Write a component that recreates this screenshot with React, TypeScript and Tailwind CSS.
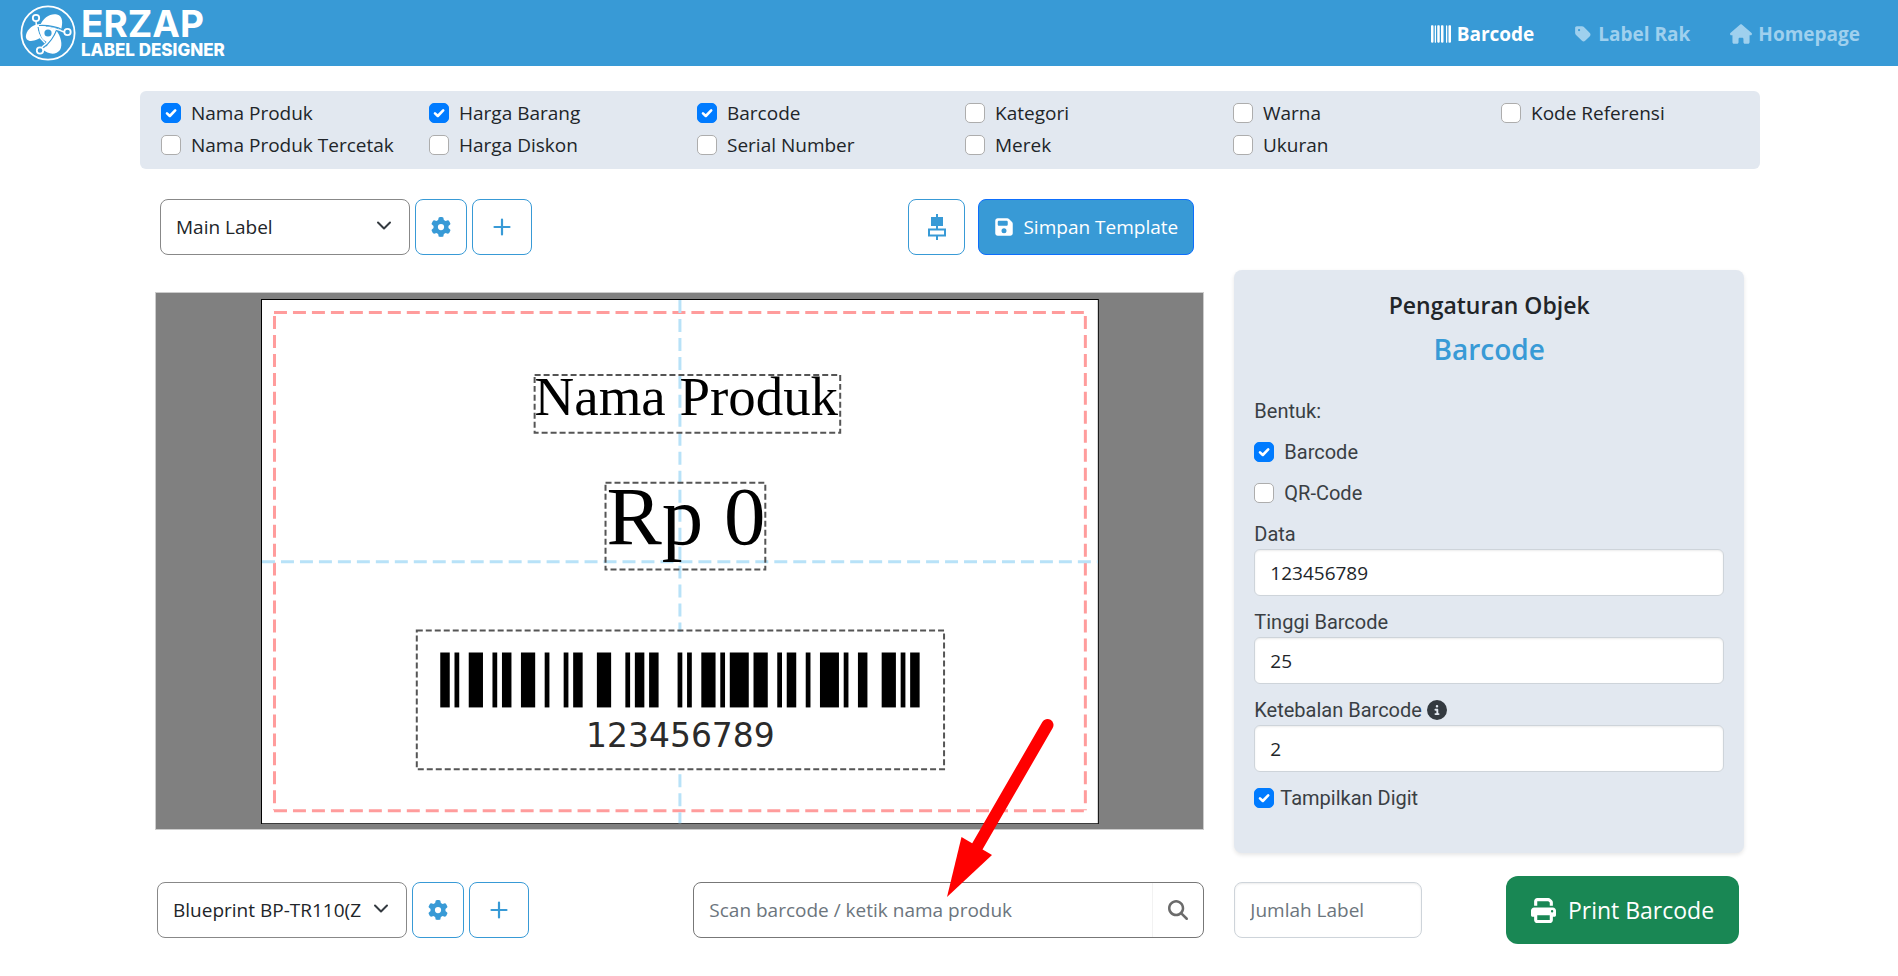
import React, { useId } from "react";
import {
  FaBarcode,
  FaCircleInfo,
  FaFloppyDisk,
  FaGear,
  FaHouse,
  FaMagnifyingGlass,
  FaPrint,
  FaTag,
} from "react-icons/fa6";

function Checkbox({ id, defaultChecked = false }: { id: string; defaultChecked?: boolean }) {
  return (
    <span className="relative inline-flex size-5 shrink-0">
      <input
        id={id}
        type="checkbox"
        defaultChecked={defaultChecked}
        className="peer size-5 appearance-none rounded-[5px] border border-[#adadad] bg-white checked:border-[#007bff] checked:bg-[#007bff]"
      />
      <svg
        viewBox="0 0 20 20"
        className="pointer-events-none absolute inset-0 hidden size-5 peer-checked:block"
        fill="none"
        stroke="#fff"
        strokeWidth="2.6"
        strokeLinecap="round"
        strokeLinejoin="round"
      >
        <path d="M6 10.4 L8.8 13 L14.2 7.4" />
      </svg>
    </span>
  );
}

function Logo() {
  return (
    <a href="#" className="flex items-center gap-[5px] text-white" aria-label="ERZAP Label Designer">
      <svg viewBox="0 0 56 56" className="size-14" fill="none">
        <circle cx="28" cy="28" r="26.6" stroke="#fff" strokeWidth="1.8" />
        <g fill="#fff">
          <path d="M26 20 C17 17 8 22 6 30 C5 35 9 37 14 35.500 C19 34 23 32 25 28 Z" />
          <path d="M20 21 C23 12 31 8 37 9.500 C43 11 43 18 41 25 C35 22 29 21 20 21 Z" />
          <path d="M36 25 C41 31 43 40 40 45 C36 50 29 50 22 44 C27 39 33 33 36 25 Z" />
          <path d="M22 21 L37 25 L28 38 L21 33 Z" />
        </g>
        <g stroke="#389ad6" strokeWidth="1.2">
          <path d="M19 20.500 C28 20 36 21.500 43 25" />
          <path d="M37.500 23 C34 32 30 38 23 43" />
          <path d="M18 22 C19 30 22 36 27 41" />
        </g>
        <g stroke="#fff" strokeWidth="1.5">
          <path d="M16 16 C16 25 19 33 25 38" />
          <path d="M44 27 C36 23 29 22 22 22.500" />
          <path d="M22 42 C29 37 33 31 35 24" />
        </g>
        <circle cx="28" cy="28" r="3.6" fill="#389ad6" />
        <g fill="#389ad6" stroke="#fff" strokeWidth="1.8">
          <circle cx="16" cy="13" r="3.200" />
          <circle cx="47.500" cy="27" r="3.200" />
          <circle cx="20" cy="45.500" r="3.200" />
        </g>
      </svg>
      <span className="flex flex-col font-[Inter,sans-serif]">
        <span className="text-[37px] leading-[34px] font-bold">ERZAP</span>
        <span className="text-[17px] leading-[18px] font-extrabold">LABEL DESIGNER</span>
      </span>
    </a>
  );
}

const fields: { label: string; checked?: boolean }[] = [
  { label: "Nama Produk", checked: true },
  { label: "Harga Barang", checked: true },
  { label: "Barcode", checked: true },
  { label: "Kategori" },
  { label: "Warna" },
  { label: "Kode Referensi" },
  { label: "Nama Produk Tercetak" },
  { label: "Harga Diskon" },
  { label: "Serial Number" },
  { label: "Merek" },
  { label: "Ukuran" },
];

function SelectBox({ label, option }: { label: string; option: string }) {
  return (
    <span className="relative inline-flex w-[250px]">
      <select
        aria-label={label}
        className="h-14 w-full appearance-none rounded-lg border border-[#888] bg-white pr-11 pl-[15px] text-[19px]"
      >
        <option>{option}</option>
      </select>
      <svg
        viewBox="0 0 16 10"
        className="pointer-events-none absolute top-[22px] right-[18px] h-[10px] w-4"
        fill="none"
        stroke="#343a40"
        strokeWidth="2"
        strokeLinecap="round"
        strokeLinejoin="round"
      >
        <path d="M2 1.500 L8 7.500 L14 1.500" />
      </svg>
    </span>
  );
}

const outline =
  "flex h-14 items-center justify-center rounded-lg border border-[#389ad6] bg-white text-[#389ad6]";

function TemplateControls({ label, option }: { label: string; option: string }) {
  return (
    <div className="flex items-center gap-[5px]">
      <SelectBox label={label} option={option} />
      <button type="button" aria-label={label + " settings"} className={outline + " w-[52px]"}>
        <FaGear className="size-5" />
      </button>
      <button type="button" aria-label={label + " add"} className={outline + " w-[60px]"}>
        <svg viewBox="0 0 18 18" className="size-[18px]" stroke="currentColor" strokeWidth="2.2" strokeLinecap="round">
          <path d="M9 1.500 V16.500 M1.500 9 H16.500" />
        </svg>
      </button>
    </div>
  );
}

const bars = [
  [0, 2], [3, 1], [6, 3], [11, 1], [13, 2], [17, 3], [22, 1], [26, 1], [28, 2], [33, 3],
  [39, 1], [41, 2], [44, 2], [50, 1], [52, 1], [55, 3], [59, 1], [61, 4], [66, 3], [71, 1],
  [73, 2], [77, 1], [80, 4], [85, 1], [88, 2], [93, 3], [97, 1], [99, 2],
];

function LabelCanvas() {
  return (
    <div className="flex justify-center border border-[#ccc] bg-[#808080] pt-[6px] pb-[5px]">
      <svg viewBox="0 0 839 526" className="w-4/5 max-w-[839px]" role="img" aria-label="Label preview">
        <rect x="0.500" y="0.500" width="838" height="525" fill="#fff" stroke="#000" />
        <g fill="none" strokeWidth="3" strokeDasharray="13 6">
          <path d="M13 13.500 H826 M825.500 17 V512 M13.500 17 V512 M13 512.500 H826" stroke="#ff9c9c" />
          <path d="M419.500 1 V525" stroke="#b8e2f8" />
          <path d="M1 263 H838" stroke="#b8e2f8" />
        </g>
        <g fill="#000" fontFamily="'Liberation Serif', serif">
          <text x="274" y="116" fontSize="55">Nama Produk</text>
          <text x="346" y="245" fontSize="83">Rp 0</text>
        </g>
        <rect x="156.500" y="333.500" width="527" height="138" fill="#fff" />
        <g fill="none" stroke="#555" strokeWidth="2" strokeDasharray="6 3">
          <rect x="274" y="76" width="306" height="58" />
          <rect x="345" y="184" width="160" height="87" />
          <rect x="156" y="332" width="528" height="139" />
        </g>
        <g fill="#000">
          {bars.map(([start, width]) => (
            <rect key={start} x={179.5 + start * 4.753} y="354" width={width * 4.753} height="55" />
          ))}
        </g>
        <text x="420" y="449" fontSize="33" textAnchor="middle" fill="#2b2b2b" fontFamily="'DejaVu Sans', sans-serif">
          123456789
        </text>
      </svg>
    </div>
  );
}

function Field({ label, value, info = false }: { label: string; value: string; info?: boolean }) {
  const id = useId();
  return (
    <div className="flex flex-col">
      <label htmlFor={id} className="flex items-center gap-[5px] leading-[30px]">
        {label}
        {info && <FaCircleInfo className="size-5 text-[#343a40]" />}
      </label>
      <input
        id={id}
        defaultValue={value}
        className="h-[47px] w-full rounded-md border border-[#ced4da] bg-white px-[15px] font-['Open_Sans',sans-serif] text-[19px] text-[#212529] shadow-[inset_0_1px_2px_rgba(0,0,0,0.08)]"
      />
    </div>
  );
}

export default function App() {
  return (
    <div className="min-h-screen bg-white font-['Open_Sans',sans-serif] text-[19px] text-[#212529]">
      <header className="flex h-[66px] items-center justify-between bg-[#389ad6] pr-[38px] pl-5">
        <Logo />
        <nav className="flex items-center gap-10 pt-[2px] text-[19px] font-bold text-[#9fd0ee]">
          <a href="#barcode" className="flex items-center gap-[6px] text-white">
            <FaBarcode className="size-5" /> Barcode
          </a>
          <a href="#rak" className="flex items-center gap-[6px]">
            <FaTag className="size-[18px]" /> Label Rak
          </a>
          <a href="#home" className="flex items-center gap-[6px]">
            <FaHouse className="size-[22px]" /> Homepage
          </a>
        </nav>
      </header>

      <main className="mx-auto mt-[25px] w-full max-w-[1622px] pl-[2px]">
        <div className="grid grid-cols-6 rounded-md bg-[#e2e8f0] px-[6px] pt-[6px] pb-2">
          {fields.map((f, i) => (
            <label key={f.label} htmlFor={"field-" + i} className="flex h-8 items-center gap-[10px] px-[15px] whitespace-nowrap">
              <Checkbox id={"field-" + i} defaultChecked={f.checked} />
              {f.label}
            </label>
          ))}
        </div>

        <div className="pr-4 pl-[15px]">
          <div className="grid grid-cols-[35fr_17fr] gap-[30px]">
            <section className="pt-[30px]">
              <div className="flex items-center justify-between pr-[10px] pl-[5px]">
                <TemplateControls label="Template" option="Main Label" />
                <div className="flex items-center gap-[13px]">
                  <button type="button" aria-label="Align center" className={outline + " w-[57px]"}>
                    <svg viewBox="0 0 18 26" className="h-[26px] w-[18px]" fill="none" stroke="currentColor" strokeWidth="2">
                      <path d="M9 0 V4 M9 11 V15 M9 22 V26" />
                      <rect x="3" y="3" width="12" height="9" fill="currentColor" stroke="none" />
                      <rect x="1" y="15.500" width="16" height="6" />
                    </svg>
                  </button>
                  <button
                    type="button"
                    className="flex h-14 w-[216px] items-center justify-center gap-[9px] rounded-lg border border-[#0d6efd] bg-[#389ad6] text-white"
                  >
                    <FaFloppyDisk className="size-5" /> Simpan Template
                  </button>
                </div>
              </div>
              <div className="mt-[37px]">
                <LabelCanvas />
              </div>
            </section>

            <aside className="mt-[101px] flex flex-col gap-[11px] rounded-lg bg-[#e2e8f0] px-5 pt-5 pb-10 font-[Roboto,sans-serif] text-[20px] text-[#3a3f44] shadow-[0_2px_4px_rgba(0,0,0,0.1)]">
              <h2 className="text-center font-['Open_Sans',sans-serif] text-[23px] leading-[30px] font-semibold text-[#212529]">
                Pengaturan Objek
              </h2>
              <h3 className="mb-[18px] text-center font-['Open_Sans',sans-serif] text-[28px] leading-9 font-semibold text-[#389ad6]">
                Barcode
              </h3>
              <div className="leading-[30px]">Bentuk:</div>
              <label htmlFor="shape-barcode" className="flex h-[30px] items-center gap-[10px]">
                <Checkbox id="shape-barcode" defaultChecked />
                Barcode
              </label>
              <label htmlFor="shape-qr" className="flex h-[30px] items-center gap-[10px]">
                <Checkbox id="shape-qr" />
                QR-Code
              </label>
              <Field label="Data" value="123456789" />
              <Field label="Tinggi Barcode" value="25" />
              <Field label="Ketebalan Barcode" value="2" info />
              <label htmlFor="digit" className="flex h-[30px] items-center gap-[6px]">
                <Checkbox id="digit" defaultChecked />
                Tampilkan Digit
              </label>
            </aside>
          </div>

          <div className="mt-[23px] grid grid-cols-[35fr_17fr] items-center gap-[30px]">
            <div className="flex items-center justify-between pl-[2px]">
              <TemplateControls label="Printer" option="Blueprint BP-TR110(Z" />
              <div className="relative flex h-14 w-[511px] rounded-lg border border-[#777] bg-white">
                <input
                  aria-label="Scan barcode"
                  placeholder="Scan barcode / ketik nama produk"
                  className="min-w-0 flex-1 rounded-l-lg border-r border-[#f2f2f2] px-[15px] placeholder:text-[#6c757d]"
                />
                <button type="button" aria-label="Search" className="flex w-[50px] items-center justify-center text-[#6b6b6b]">
                  <FaMagnifyingGlass className="size-5" />
                </button>
                <svg viewBox="0 0 110 184" className="pointer-events-none absolute right-[147px] bottom-[39px] h-[184px] w-[110px]" fill="#f00">
                  <path d="M101.500 11 L31 133" stroke="#f00" strokeWidth="12" strokeLinecap="round" />
                  <path d="M1 183 L15.500 123 L46 141 Z" />
                </svg>
              </div>
            </div>
            <div className="flex items-center justify-between pr-[5px]">
              <input
                aria-label="Jumlah Label"
                placeholder="Jumlah Label"
                className="h-14 w-[188px] rounded-lg border border-[#ced4da] px-[15px] shadow-[inset_0_1px_2px_rgba(0,0,0,0.08)] placeholder:text-[#6c757d]"
              />
              <button
                type="button"
                className="flex h-[68px] w-[233px] items-center justify-center gap-3 rounded-xl bg-[#198754] text-[23px] text-white"
              >
                <FaPrint className="size-[25px]" /> Print Barcode
              </button>
            </div>
          </div>
        </div>
      </main>
    </div>
  );
}
